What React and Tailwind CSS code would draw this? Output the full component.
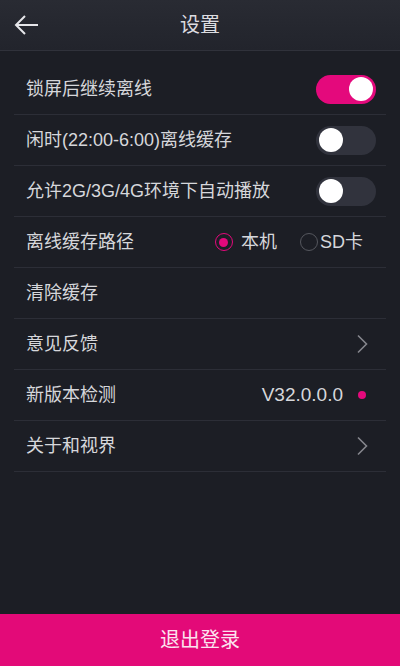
import React, { useState } from 'react';

const Toggle = ({ on, onClick }) => (
    <button
        onClick={onClick}
        className={`w-[60px] h-[29px] rounded-full flex items-center px-[3px] ${on ? 'bg-[#e4097c] justify-end' : 'bg-[#31333d] justify-start'}`}
    >
        <span className="w-[24px] h-[24px] rounded-full bg-white block" />
    </button>
);

const Chevron = () => (
    <svg className="mr-[8px]" width="12" height="20" viewBox="0 0 12 20" fill="none">
        <path d="M2 1.5L10.5 10L2 18.5" stroke="#85868c" strokeWidth="1.6" />
    </svg>
);

const Row = ({ label, children }) => (
    <div className="h-[51px] mx-[14px] flex items-center justify-between border-b border-[#2c2e37]">
        <span className="pl-[12px] text-[18px] text-[#d6d7db]">{label}</span>
        <div className="flex items-center pr-[10px]">{children}</div>
    </div>
);

const App = () => {
    const [lock, setLock] = useState(true);
    const [idle, setIdle] = useState(false);
    const [mobile, setMobile] = useState(false);
    const [path, setPath] = useState('local');

    return (
        <div className="w-[400px] h-[666px] bg-[#1c1e25] flex flex-col" style={{ fontFamily: '"Liberation Sans", "Noto Sans CJK SC", sans-serif' }}>
            {/* Header */}
            <div className="h-[51px] bg-gradient-to-b from-[#292b33] to-[#22242c] border-b border-[#30323b] flex items-center relative">
                <svg className="ml-[13px]" width="26" height="22" viewBox="0 0 26 22" fill="none">
                    <path d="M12 2L3 11L12 20M3 11H25" stroke="#e6e6ea" strokeWidth="2" />
                </svg>
                <span className="absolute left-1/2 -translate-x-1/2 text-[20px] text-[#dcdce0]">设置</span>
            </div>

            {/* Settings list */}
            <div className="flex-1 pt-[13px]">
                <Row label="锁屏后继续离线">
                    <Toggle on={lock} onClick={() => setLock(!lock)} />
                </Row>
                <Row label="闲时(22:00-6:00)离线缓存">
                    <Toggle on={idle} onClick={() => setIdle(!idle)} />
                </Row>
                <Row label="允许2G/3G/4G环境下自动播放">
                    <Toggle on={mobile} onClick={() => setMobile(!mobile)} />
                </Row>
                <Row label="离线缓存路径">
                    <button onClick={() => setPath('local')} className="flex items-center gap-[8px]">
                        <span className={`w-[18px] h-[18px] rounded-full border-[1.5px] flex items-center justify-center ${path === 'local' ? 'border-[#e4097c]' : 'border-[#55575e]'}`}>
                            {path === 'local' && <span className="w-[9px] h-[9px] rounded-full bg-[#e4097c]" />}
                        </span>
                        <span className="text-[18px] text-[#d6d7db]">本机</span>
                    </button>
                    <button onClick={() => setPath('sd')} className="flex items-center gap-[2px] ml-[23px] mr-[13px]">
                        <span className={`w-[18px] h-[18px] rounded-full border-[1.5px] flex items-center justify-center ${path === 'sd' ? 'border-[#e4097c]' : 'border-[#55575e]'}`}>
                            {path === 'sd' && <span className="w-[9px] h-[9px] rounded-full bg-[#e4097c]" />}
                        </span>
                        <span className="text-[18px] text-[#d6d7db]">SD卡</span>
                    </button>
                </Row>
                <Row label="清除缓存" />
                <Row label="意见反馈">
                    <Chevron />
                </Row>
                <Row label="新版本检测">
                    <span className="text-[19px] text-[#d6d7db]">V32.0.0.0</span>
                    <span className="w-[8px] h-[8px] rounded-full bg-[#e4097c] ml-[15px] mr-[10px]" />
                </Row>
                <Row label="关于和视界">
                    <Chevron />
                </Row>
            </div>

            {/* Logout */}
            <button className="h-[52px] bg-[#e30a78] text-[20px] text-[#fbe3ef] flex items-center justify-center">
                退出登录
            </button>
        </div>
    );
};

export default App;
